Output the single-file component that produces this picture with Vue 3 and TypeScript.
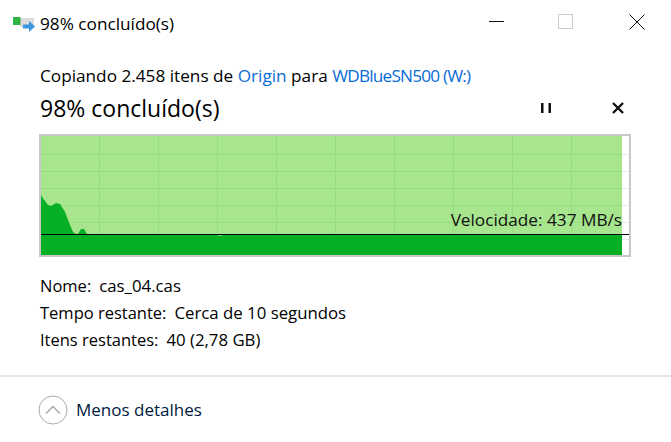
<template>
  <div class="dialog">
    <header class="titlebar">
      <svg class="app-icon" width="24" height="20" viewBox="0 0 24 20">
        <rect x="8" y="5" width="14" height="9" fill="#dcdcdc" />
        <rect x="1" y="4" width="7.500" height="8" fill="#2fb344" />
        <path d="M11 11.500h6V8l6 5.500-6 5.500v-3.500h-6z" fill="#3a96dd" />
      </svg>
      <span class="title">{{ percentLabel }}</span>
      <div class="window-buttons">
        <svg class="minimize" width="16" height="16" viewBox="0 0 16 16"><path d="M0 7.500h15" stroke="#111" fill="none" /></svg>
        <svg width="16" height="16" viewBox="0 0 16 16"><rect x="0.500" y="0.500" width="14" height="14" stroke="#ccc" fill="none" /></svg>
        <svg width="16" height="16" viewBox="0 0 16 16"><path d="M0.500 0.500l15 15M15.500 0.500l-15 15" stroke="#111" fill="none" /></svg>
      </div>
    </header>

    <main class="body">
      <p class="copying">
        Copiando 2.458 itens de <a class="link">Origin</a> para <a class="link drive">WDBlueSN500 (W:)</a>
      </p>
      <div class="heading-row">
        <h1 class="heading">{{ percentLabel }}</h1>
        <div class="actions">
          <svg width="12" height="12" viewBox="0 0 12 12"><path d="M1 1h2.500v10H1zM8.500 1H11v10H8.500z" fill="#111" /></svg>
          <svg width="14" height="14" viewBox="0 0 14 14"><path d="M2 2l10 10M12 2L2 12" stroke="#111" stroke-width="2.400" fill="none" /></svg>
        </div>
      </div>

      <div class="chart">
        <svg class="plot" width="588" height="119" viewBox="0 0 588 119">
          <path :d="fadedGrid" stroke="#dcf3dc" stroke-width="1" fill="none" />
          <rect x="0" y="0" width="581" height="119" fill="#a7e58e" />
          <path :d="gridPath" stroke="#95de7e" stroke-width="1" fill="none" />
          <path :d="areaPath" fill="#06b025" />
        </svg>
        <span class="speed">Velocidade: 437 MB/s</span>
        <div class="speed-line"></div>
      </div>

      <dl class="facts">
        <div v-for="fact in facts" :key="fact.label" class="fact">
          <dt>{{ fact.label }}</dt>
          <dd>{{ fact.value }}</dd>
        </div>
      </dl>
    </main>

    <footer class="footer">
      <svg width="30" height="30" viewBox="0 0 30 30">
        <circle cx="15" cy="15" r="14" stroke="#aaa" fill="#fff" />
        <path d="M8 18.500l7-7 7 7" stroke="#aaa" stroke-width="1.500" fill="none" />
      </svg>
      <span>Menos detalhes</span>
    </footer>
  </div>
</template>

<script setup lang="ts">
const percentLabel = '98% concluído(s)'

const facts = [
  { label: 'Nome:', value: 'cas_04.cas' },
  { label: 'Tempo restante:', value: 'Cerca de 10 segundos' },
  { label: 'Itens restantes:', value: '40 (2,78 GB)' },
]

// grid lines every 59px across, every 17px down
const verticals = [58, 117, 176, 235, 294, 353, 412, 471, 530]
const horizontals = [18, 35, 52, 69, 86, 103]
const gridPath =
  verticals.map((x) => `M${x + 0.5} 0V119`).join('') +
  horizontals.map((y) => `M0 ${y + 0.5}H581`).join('')
const fadedGrid = horizontals.map((y) => `M581 ${y + 0.5}H588`).join('')

// speed history, values are y inside the plot
const areaPath =
  'M0 59L1 61L7 69L10 70L15 67L19 68L24 76L29 89L32 96L35 98L37 98L40 93L43 93L46 98' +
  'L174 98L179 100L184 98L581 98V119H0Z'
</script>

<style>
html, body { margin: 0; background: #fff; }
</style>

<style scoped>
.dialog {
  width: 671px;
  height: 442px;
  background: #fff;
  color: #000;
  font-family: "Open Sans", "Noto Sans", sans-serif;
  overflow: hidden;
  display: flex;
  flex-direction: column;
}
.titlebar {
  height: 46px;
  display: flex;
  align-items: center;
  padding-left: 12px;
  flex: none;
}
.app-icon { margin-right: 4px; }
.title { font-size: 17.200px; }
.window-buttons {
  margin-left: auto;
  margin-top: -3px;
  display: flex;
  gap: 55px;
  padding-right: 26px;
}
.minimize { margin-right: -2px; }
.body {
  padding: 19px 40px 0 40px;
  flex: 1;
}
.copying {
  margin: 0;
  font-size: 17.200px;
  line-height: 22px;
  white-space: nowrap;
}
.link { color: #0a6cd6; }
.drive { letter-spacing: -0.800px; }
.heading-row {
  display: flex;
  align-items: center;
  height: 41px;
}
.heading {
  margin: 0;
  font-size: 23px;
  font-weight: 400;
}
.actions {
  margin-left: auto;
  display: flex;
  align-items: center;
  gap: 59px;
  padding-right: 6px;
}
.chart {
  position: relative;
  width: 592px;
  height: 123px;
  margin-top: 6px;
  box-sizing: border-box;
  margin-left: -1px;
  border: 2px solid #c8c8c8;
}
.plot { display: block; }
.speed {
  position: absolute;
  right: 7px;
  top: 73px;
  font-size: 17.200px;
  line-height: 22px;
  color: #111;
}
.speed-line {
  position: absolute;
  left: 0;
  right: 0;
  top: 98px;
  height: 1px;
  background: #000;
}
.facts {
  margin: 15px 0 0;
  font-size: 16.800px;
  line-height: 27px;
}
.fact { display: flex; gap: 8px; }
.fact dt, .fact dd { margin: 0; }
.fact dt { font-size: 16.500px; }
.footer {
  border-top: 2px solid #e5e5e5;
  height: 65px;
  flex: none;
  display: flex;
  align-items: center;
  gap: 8px;
  padding-left: 38px;
  font-size: 17px;
  color: #001a40;
}
</style>
